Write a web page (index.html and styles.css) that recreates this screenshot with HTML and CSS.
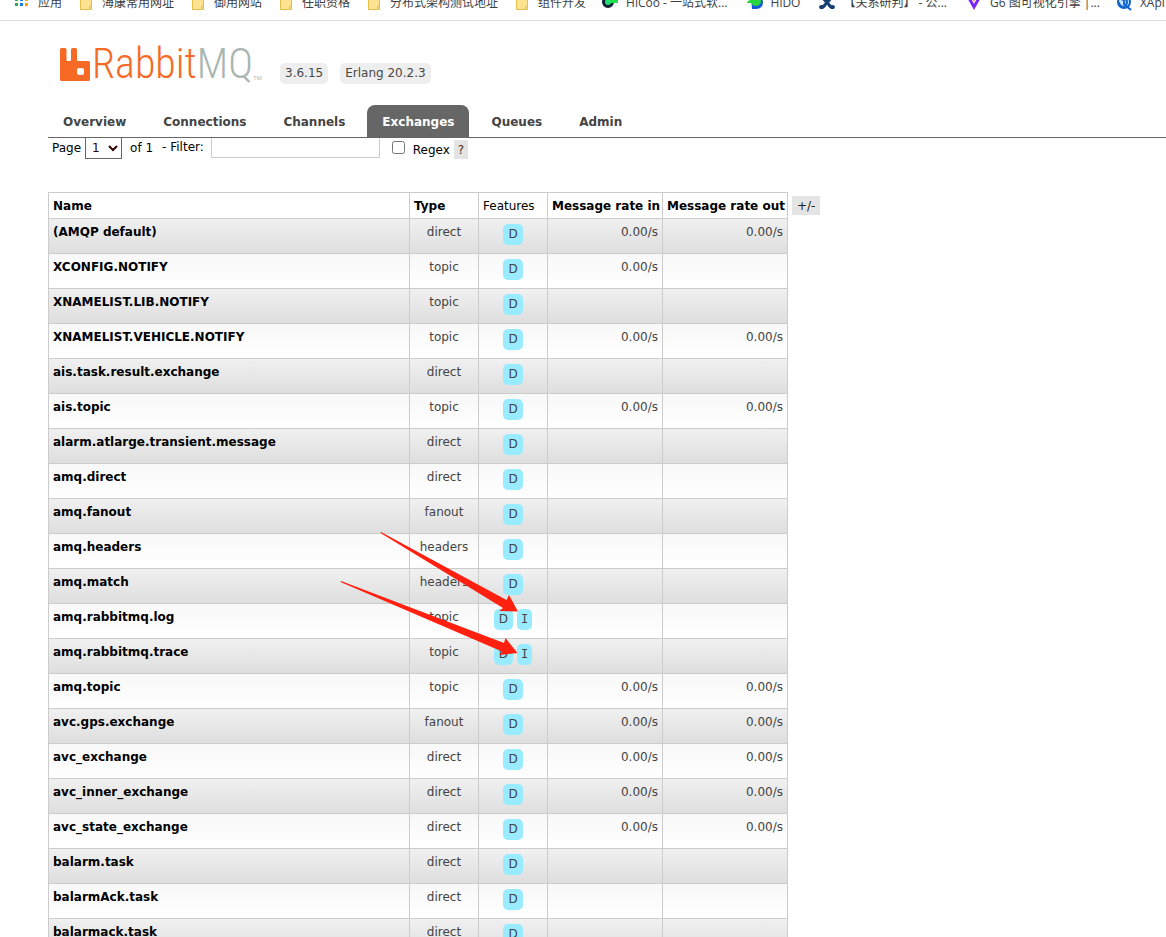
FILE: index.html
```html
<!DOCTYPE html>
<html lang="en">
<head>
<meta charset="utf-8">
<title>RabbitMQ Management</title>
<link rel="stylesheet" href="styles.css">
</head>
<body>
<svg class="defs" aria-hidden="true"><defs>
<symbol id="folder" viewBox="0 0 16 16"><path d="M2.500 -1h11v11.500l-1 1v3h-10z" fill="#fee391" stroke="#e3c04b"/><path d="M11.500 14.500v-3l2-1v4z" fill="#fee391" stroke="#e3c04b"/></symbol>
</defs></svg>
<nav class="bookmarks" aria-label="Bookmarks">
<a href="#"><svg viewBox="0 0 16 16"><path d="M1 3h3v3H1zM1 8h3v3H1z" fill="#34a853"/><path d="M6 3h3v3H6zM6 8h3v3H6z" fill="#1a80f0"/><path d="M11 3h3v3h-3zM11 8h3v3h-3z" fill="#f4a500"/></svg><span>应用</span></a>
<a href="#"><svg><use href="#folder"/></svg><span>海康常用网址</span></a>
<a href="#"><svg><use href="#folder"/></svg><span>御用网站</span></a>
<a href="#"><svg><use href="#folder"/></svg><span>任职资格</span></a>
<a href="#"><svg><use href="#folder"/></svg><span>分布式架构测试地址</span></a>
<a href="#"><svg><use href="#folder"/></svg><span>组件开发</span></a>
<a href="#" class="site"><svg viewBox="0 0 16 16"><circle cx="6" cy="7" r="4.500" fill="#20e070" stroke="#142036" stroke-width="3"/><path d="M8 5h8v3H8z" fill="#20e050"/></svg><span>HiCoo - 一站式软...</span></a>
<a href="#" class="site"><svg viewBox="0 0 16 16"><path d="M4 3h6q6 0 6 4 0 7-7 7H5z" fill="#1558d8"/><path d="M0 7l5-4h6q3 1 3 4-1 4-5 4-4 0-4-3H0z" fill="#27d53c"/></svg><span>HiDO</span></a>
<a href="#" class="site"><svg viewBox="0 0 16 16"><path d="M3 2l9 10M13 2L4 12" stroke="#173f73" stroke-width="3"/><path d="M0 12q0-2 3-2l4 1-3 3H1zM16 12q0-2-3-2l-4 1 3 3h3z" fill="#173f73"/></svg><span>【关系研判】 - 公...</span></a>
<a href="#"><svg viewBox="0 0 16 16"><path d="M3 3l5 9 5-9" fill="none" stroke="#7626f5" stroke-width="3"/><path d="M5 1l3 6 3-6z" fill="#ff8a35"/></svg><span>G6 图可视化引擎 |...</span></a>
<a href="#"><svg viewBox="0 0 16 16"><circle cx="8" cy="7" r="6" fill="#c9e5ff" stroke="#1264cb" stroke-width="2"/><path d="M4 4q5 0 4 5l7 6M7 3q6 2 3 7M3 7q0 5 6 5" fill="none" stroke="#1264cb" stroke-width="2"/></svg><span>XApi</span></a>
</nav>
<header>
<div class="brand">
<a class="logo" href="#" aria-label="RabbitMQ home"><svg viewBox="0 0 30 33"><path d="M1.500 0H5q1.500 0 1.500 1.500V12q0 1 1 1H10q1 0 1-1V1.500Q11 0 12.500 0H15.500Q17 0 17 1.500V12q0 1 1 1h10.500q1.500 0 1.500 1.500V31.500Q30 33 28.500 33h-27Q0 33 0 31.500V1.500Q0 0 1.500 0z" fill="#f66a26"/><rect x="17" y="20" width="7" height="7" rx="2" fill="#fff"/></svg><span class="word"><span class="rabbit">Rabbit</span><span class="mq">MQ</span></span><small>TM</small></a>
<span class="tag">3.6.15</span><span class="tag">Erlang 20.2.3</span>
</div>
<nav class="tabs" aria-label="Sections"><a href="#">Overview</a><a href="#">Connections</a><a href="#">Channels</a><a href="#" class="active" aria-current="page">Exchanges</a><a href="#">Queues</a><a href="#">Admin</a></nav>
</header>
<main>
<form class="filter">
<label for="page">Page</label><select id="page"><option>1</option></select><span class="of">of 1</span><label for="text" class="lfilter">- Filter:</label><input type="text" id="text"><input type="checkbox" id="regex"><label for="regex" class="lregex">Regex</label><button type="button" class="help">?</button>
</form>
<div class="list">
<table>
<colgroup><col class="c-name"><col class="c-type"><col class="c-type"><col class="c-in"><col class="c-out"></colgroup>
<thead><tr><th>Name</th><th>Type</th><th class="plain">Features</th><th>Message rate in</th><th>Message rate out</th></tr></thead>
<tbody>
<tr><td><a href="#">(AMQP default)</a></td><td>direct</td><td><span class="f">D</span></td><td>0.00/s</td><td>0.00/s</td></tr>
<tr><td><a href="#">XCONFIG.NOTIFY</a></td><td>topic</td><td><span class="f">D</span></td><td>0.00/s</td><td></td></tr>
<tr><td><a href="#">XNAMELIST.LIB.NOTIFY</a></td><td>topic</td><td><span class="f">D</span></td><td></td><td></td></tr>
<tr><td><a href="#">XNAMELIST.VEHICLE.NOTIFY</a></td><td>topic</td><td><span class="f">D</span></td><td>0.00/s</td><td>0.00/s</td></tr>
<tr><td><a href="#">ais.task.result.exchange</a></td><td>direct</td><td><span class="f">D</span></td><td></td><td></td></tr>
<tr><td><a href="#">ais.topic</a></td><td>topic</td><td><span class="f">D</span></td><td>0.00/s</td><td>0.00/s</td></tr>
<tr><td><a href="#">alarm.atlarge.transient.message</a></td><td>direct</td><td><span class="f">D</span></td><td></td><td></td></tr>
<tr><td><a href="#">amq.direct</a></td><td>direct</td><td><span class="f">D</span></td><td></td><td></td></tr>
<tr><td><a href="#">amq.fanout</a></td><td>fanout</td><td><span class="f">D</span></td><td></td><td></td></tr>
<tr><td><a href="#">amq.headers</a></td><td>headers</td><td><span class="f">D</span></td><td></td><td></td></tr>
<tr><td><a href="#">amq.match</a></td><td>headers</td><td><span class="f">D</span></td><td></td><td></td></tr>
<tr><td><a href="#">amq.rabbitmq.log</a></td><td>topic</td><td><span class="f">D</span><span class="f i">I</span></td><td></td><td></td></tr>
<tr><td><a href="#">amq.rabbitmq.trace</a></td><td>topic</td><td><span class="f">D</span><span class="f i">I</span></td><td></td><td></td></tr>
<tr><td><a href="#">amq.topic</a></td><td>topic</td><td><span class="f">D</span></td><td>0.00/s</td><td>0.00/s</td></tr>
<tr><td><a href="#">avc.gps.exchange</a></td><td>fanout</td><td><span class="f">D</span></td><td>0.00/s</td><td>0.00/s</td></tr>
<tr><td><a href="#">avc_exchange</a></td><td>direct</td><td><span class="f">D</span></td><td>0.00/s</td><td>0.00/s</td></tr>
<tr><td><a href="#">avc_inner_exchange</a></td><td>direct</td><td><span class="f">D</span></td><td>0.00/s</td><td>0.00/s</td></tr>
<tr><td><a href="#">avc_state_exchange</a></td><td>direct</td><td><span class="f">D</span></td><td>0.00/s</td><td>0.00/s</td></tr>
<tr><td><a href="#">balarm.task</a></td><td>direct</td><td><span class="f">D</span></td><td></td><td></td></tr>
<tr><td><a href="#">balarmAck.task</a></td><td>direct</td><td><span class="f">D</span></td><td></td><td></td></tr>
<tr><td><a href="#">balarmack.task</a></td><td>direct</td><td><span class="f">D</span></td><td></td><td></td></tr>
</tbody>
</table>
<button type="button" class="cols">+/-</button>
<svg class="arrows" viewBox="0 0 180 125" aria-hidden="true"><path d="M41 0L166.500 68 169 63 178 79.500 159 79 163 76 40.500 1zM1 49L164 111 165.500 106 177.500 121 159.500 123 162 119.500 .500 50z" fill="#ff2010"/></svg>
</div>
</main>
</body>
</html>
```
FILE: styles.css
```css
* { box-sizing: border-box; }
html { overflow-x: hidden; }
body { margin: 0; background: #fff; color: #000; font: 12px/16px Verdana, "DejaVu Sans", sans-serif; }
a { color: inherit; text-decoration: none; }
.defs { position: absolute; width: 0; height: 0; }

.bookmarks { display: flex; gap: 16px; height: 21px; padding-left: 14px; border-bottom: 1px solid #dadce0; overflow: hidden; white-space: nowrap; font: 12px/6px "Open Sans", "Noto Sans CJK SC", sans-serif; color: #3c4043; }
.bookmarks a { display: flex; flex: none; align-items: center; gap: 8px; height: 6px; }
.bookmarks .site { margin-right: 3px; }
.bookmarks svg { width: 16px; height: 16px; }

.brand { display: flex; align-items: flex-end; gap: 12px; height: 63px; padding-left: 60px; }
.logo { display: flex; align-items: flex-end; width: 208px; height: 40px; color: #f66a26; }
.logo svg { width: 30px; height: 33px; margin-bottom: 3px; }
.word { padding-left: 2px; font: 300 42px/40px "Roboto Condensed", "Open Sans Condensed", "Liberation Sans Narrow", Roboto, sans-serif; }
.mq { color: #a9b6b1; }
.logo small { font: 6px/8px "Liberation Sans", sans-serif; color: #a9b6b1; margin-bottom: 2px; }
.tag { padding: 2px 5px; border-radius: 5px; background: #eee; color: #484848; line-height: 17px; }

.tabs { display: flex; gap: 7px; margin-left: 48px; padding-top: 21px; border-bottom: 1px solid #666; }
.tabs a { padding: 2px 15px 0; border-radius: 8px 8px 0 0; color: #444; font-weight: bold; line-height: 30px; }
.tabs .active { background: #666; color: #fff; }

main { padding-left: 48px; }
.filter { display: flex; align-items: flex-start; height: 54px; padding-left: 4px; }
.filter label, .of { line-height: 20px; }
.filter select { width: 37px; height: 21px; margin-left: 4px; padding: 0 0 0 2px; border: 1px solid #666; border-top: 0; background: #fff; font: inherit; color: #300; }
.of { margin-left: 8px; }
.filter .lfilter { margin-left: 9px; line-height: 18px; }
.filter input[type="text"] { width: 169px; height: 20px; margin-left: 7px; border: 1px solid #ccc; border-top: 0; font: inherit; }
.filter input[type="checkbox"] { width: 13px; height: 13px; margin: 3px 8px 0 12px; }
.filter .lregex { line-height: 24px; }
.help, .cols { border: 0; background: #e4e4e4; font: inherit; color: #222; height: 19px; }
.help { width: 14px; margin: 2px 0 0 4px; padding: 0; color: #431; }

.list { position: relative; display: flex; align-items: flex-start; gap: 4px; }
.cols { padding: 0 5px; margin-top: 4px; }
table { border-collapse: collapse; table-layout: fixed; width: 740px; }
.c-name { width: 361px; }
.c-type { width: 69px; }
.c-in { width: 115px; }
.c-out { width: 125px; }
th, td { padding: 5px 4px 3px; border: 1px solid #ccc; vertical-align: top; white-space: nowrap; }
th { height: 26px; text-align: left; }
.plain { font-weight: normal; }
td { height: 35px; color: #444; text-align: center; }
td:first-child { text-align: left; font-weight: bold; color: #000; }
td:nth-child(n+4) { text-align: right; }
tbody tr { background: linear-gradient(#f8f8f8, #fff); }
tbody tr:nth-child(odd) { background: linear-gradient(#f0f0f0, #dedede); }
.f { display: inline-block; padding: 2px 5px; border-radius: 5px; background: #99ebff; line-height: 17px; }
.f.i { margin-left: 4px; padding: 2px 4px; font-family: "DejaVu Sans Mono", monospace; }
.arrows { position: absolute; left: 292px; top: 340px; width: 180px; height: 125px; pointer-events: none; }
```
